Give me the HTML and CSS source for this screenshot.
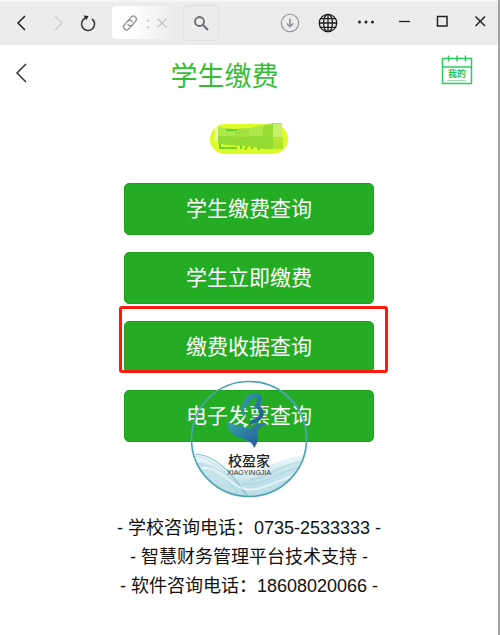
FILE: index.html
```html
<!DOCTYPE html>
<html lang="zh-CN">

<head>
    <meta charset="UTF-8">
    <meta name="viewport" content="width=device-width, initial-scale=1.0">
    <title>学生缴费</title>
    <link rel="stylesheet" href="styles.css">
</head>

<body>
    <div class="toolbar">
        <div class="nav-group">
            <button class="icon-btn" type="button" aria-label="后退">
                <svg width="20" height="20" viewBox="0 0 20 20"><path d="M13 3L6 10l7 7" stroke="#222" stroke-width="1.5"/></svg>
            </button>
            <button class="icon-btn" type="button" aria-label="前进">
                <svg width="20" height="20" viewBox="0 0 20 20"><path d="M8 3l7 7-7 7" stroke="#ccc" stroke-width="1.3"/></svg>
            </button>
            <button class="icon-btn reload" type="button" aria-label="刷新">
                <svg width="20" height="20" viewBox="0 0 20 20"><path d="M14 5.800A6.500 6.500 0 1 1 7.500 5" stroke="#333" stroke-width="1.5"/><path d="M5.500 2.500l5 .500-2 4z" fill="#222"/></svg>
            </button>
        </div>
        <div class="address">
            <svg width="18" height="18" viewBox="0 0 18 18"><g transform="rotate(-48 9 9)" stroke="#999" stroke-width="1.400"><path d="M9 12H4a3 3 0 0 1 0-6h5a3 3 0 0 1 2.500 4"/><path d="M9 6h5a3 3 0 0 1 0 6H9a3 3 0 0 1-2.500-4"/></g></svg>
            <input class="address-input" type="text" value=":" aria-label="地址">
            <button class="clear-btn" type="button" aria-label="清除">
                <svg width="12" height="12" viewBox="0 0 12 12"><path d="M1.500 1.500l9 9M10.500 1.500l-9 9" stroke="#c4c4c4" stroke-width="1.200"/></svg>
            </button>
        </div>
        <button class="search-btn" type="button" aria-label="搜索">
            <svg width="18" height="18" viewBox="0 0 18 18"><circle cx="7.500" cy="7.500" r="4.500" stroke="#666c72" stroke-width="1.800"/><path d="M11 11l5 5" stroke="#666c72" stroke-width="2"/></svg>
        </button>
        <div class="window-group">
            <button class="icon-btn" type="button" aria-label="下载">
                <svg width="20" height="20" viewBox="0 0 20 20"><circle cx="10" cy="10" r="8.700" stroke="#8c8f93" stroke-width="1.100"/><path d="M10 5.500v8M6.800 10.500l3.200 3.200 3.200-3.200" stroke="#8c8f93" stroke-width="1.500"/></svg>
            </button>
            <button class="icon-btn" type="button" aria-label="网络">
                <svg width="20" height="20" viewBox="0 0 20 20"><g stroke="#1c1c1c" stroke-width="1.300"><circle cx="10" cy="10" r="8.700"/><ellipse cx="10" cy="10" rx="4.500" ry="8.700"/><path d="M10 1.300v17.400M1.300 10h17.400M2.700 5.700h14.600M2.700 14.300h14.600"/></g></svg>
            </button>
            <button class="icon-btn" type="button" aria-label="更多">
                <svg width="20" height="20" viewBox="0 0 20 20"><g fill="#222"><circle cx="3.500" cy="9" r="1.500"/><circle cx="10" cy="9" r="1.500"/><circle cx="16.500" cy="9" r="1.500"/></g></svg>
            </button>
            <button class="icon-btn" type="button" aria-label="最小化">
                <svg width="20" height="20" viewBox="0 0 20 20"><path d="M5 8.500h11" stroke="#222" stroke-width="1.300"/></svg>
            </button>
            <button class="icon-btn" type="button" aria-label="最大化">
                <svg width="20" height="20" viewBox="0 0 20 20"><path d="M5.500 3.500h9.500v9.500h-9.500z" stroke="#222" stroke-width="1.500"/></svg>
            </button>
            <button class="icon-btn" type="button" aria-label="关闭">
                <svg width="20" height="20" viewBox="0 0 20 20"><path d="M5.500 3.500l9.500 9.500M15 3.500l-9.500 9.500" stroke="#222" stroke-width="1.500"/></svg>
            </button>
        </div>
    </div>

    <header class="page-header">
        <a class="back" href="#" aria-label="返回">
            <svg width="20" height="24" viewBox="0 0 20 24"><path d="M14 2l-9 9 9 9" stroke="#333" stroke-width="1.500"/></svg>
        </a>
        <h1>学生缴费</h1>
        <a class="mine" href="#">
            <svg width="32" height="32" viewBox="0 0 32 32">
                <path d="M1.500 4.500h29v25h-29zM1.500 13h29" stroke="#2fc964" stroke-width="1.500"/>
                <path d="M7.500 1.500v6M16 1.500v6M24.500 1.500v6" stroke="#2fc964" stroke-width="1.500"/>
                <path d="M6 26.500h19" stroke="#9be3b4"/>
                <text class="mine-text" x="16" y="23" text-anchor="middle">我的</text>
            </svg>
        </a>
    </header>

    <main>
        <div class="name-tag">
            <!-- 姓名打码 -->
            <svg width="78" height="32" viewBox="0 0 78 32">
                <rect x="0" y="1" width="78" height="30" rx="15" fill="#dcfb28"/>
                <path d="M10 20v5h15M10 25h17M31 22v4M37 23l-2 4M42 22v4M48 23l1 4" stroke="#48c72f" stroke-width="1.500"/>
                <path d="M8 4l16 2 17-1 22-5h9v14H8z" fill="#aee74a"/>
                <path d="M8 13h56v13H54l-10-2-10-1-18-1-8-2z" fill="#93da31"/>
                <path d="M25 6l14-1v9H25z" fill="#a4e140"/>
                <path d="M53 3l10-2v13H53z" fill="#97dc37"/>
                <path d="M63 1h9v13h-9z" fill="#c8ef6c"/>
                <path d="M63 14h10v12H63z" fill="#b2e52c"/>
                <path d="M5 4h3v14H5z" fill="#efffa0"/>
                <path d="M16 7h11" stroke="#48c72f" stroke-width="1.500"/>
            </svg>
        </div>

        <div class="menu">
            <button class="menu-btn" type="button">学生缴费查询</button>
            <button class="menu-btn" type="button">学生立即缴费</button>
            <div class="marked">
                <button class="menu-btn" type="button">缴费收据查询</button>
            </div>
            <div class="with-logo">
                <button class="menu-btn" type="button">电子发票查询</button>
                <svg class="logo" width="118" height="118" viewBox="0 0 118 118">
                    <defs>
                        <linearGradient id="fish" x1="0" y1="0" x2="1" y2="1">
                            <stop offset="0" stop-color="#39a5a5"/>
                            <stop offset="1" stop-color="#1d4f9c"/>
                        </linearGradient>
                        <linearGradient id="water" x1="0" y1="0" x2="0" y2="1">
                            <stop offset="0" stop-color="#e6f4f7"/>
                            <stop offset="1" stop-color="#a6d4df"/>
                        </linearGradient>
                        <clipPath id="round"><circle cx="59" cy="59" r="57"/></clipPath>
                    </defs>
                    <g clip-path="url(#round)">
                        <path d="M0 74c14-1 24 7 38 14s24 5 36 0 24-12 44-13v43H0z" fill="url(#water)" opacity=".75"/>
                        <path d="M0 84c18-6 28 6 44 14s38-14 74-18v38H0z" fill="#b5dce4" opacity=".5"/>
                        <path d="M4 76c20 2 34 18 54 40M4 82c18 4 34 16 46 34M60 100c20-2 30-16 56-20M52 104c22 2 36-12 62-18" stroke="#6fb4c8" stroke-width=".6" opacity=".5"/>
                        <path d="M6 74c22 2 38 22 54 46" stroke="#64a6c0" stroke-width="1" opacity=".8"/>
                        <path d="M12 88c16-2 24 14 40 20s34-8 58-14" stroke="#fff" stroke-width="2" opacity=".6"/>
                    </g>
                    <circle cx="59" cy="59" r="57.500" stroke="#4ba5b4" stroke-width="1.700"/>
                    <path d="M54 37c-4-5-4-11-1-14 1-5 5-9 10-10 4-1 8 1 9 5 0 3-2 6-2 8 4 3 5 8 2 12-3 5-9 4-12 8-1-3 0-6 4-7 4-1 6-4 5-8-1-3-4-2-5-5 2-3 4-6 2-8-3-1-5 2-6 5-3 3-6 4-6 8 1 2 1 4 0 6z" fill="url(#fish)"/>
                    <path d="M37 40c3 4 8 5 13 5 5 1 8 5 11 3 4-5 10-6 17-4-6 1-10 5-11 10 2 6 0 10-3 14-1-5-5-7-10-9-9-2-18-7-17-19z" fill="url(#fish)"/>
                    <circle cx="55" cy="46" r="1.500" fill="#d8f3de"/>
                    <text class="logo-name" x="59" y="86" text-anchor="middle">校盈家</text>
                    <text class="logo-pinyin" x="59" y="95" text-anchor="middle">XIAOYINGJIA</text>
                </svg>
            </div>
        </div>
    </main>

    <footer class="contact">
        <p>- 学校咨询电话：0735-2533333 -</p>
        <p>- 智慧财务管理平台技术支持 -</p>
        <p>- 软件咨询电话：18608020066 -</p>
    </footer>
</body>

</html>
```
FILE: styles.css
```css
* {
    box-sizing: border-box;
}

body {
    margin: 0;
    min-height: 100vh;
    background: #fff;
    border-right: 2px solid #a0a0a0;
    color: #111;
    font-family: "Liberation Sans", "Noto Sans CJK SC", sans-serif;
}

svg {
    display: block;
    fill: none;
}

button {
    border: none;
    padding: 0;
    background: none;
    font-family: inherit;
    cursor: pointer;
}

.toolbar {
    display: flex;
    align-items: center;
    height: 45px;
    padding: 0 8px 2px 12px;
    background: #ececec;
    border-top: 2px solid #f5f5f5;
}

.nav-group {
    display: flex;
    gap: 15px;
    margin-right: 14px;
}

.nav-group .reload {
    margin-left: -4px;
}

.icon-btn {
    width: 20px;
    height: 20px;
}

.address {
    display: flex;
    align-items: center;
    width: 62px;
    height: 33px;
    padding-left: 9px;
    border-radius: 4px;
    background: linear-gradient(to right, #fff 30%, #ececec);
}

.address svg {
    flex: none;
}

.address-input {
    width: 17px;
    padding: 0 0 0 7px;
    border: none;
    background: none;
    color: #aaa;
    font-size: 14px;
}

.search-btn {
    display: flex;
    align-items: center;
    justify-content: center;
    width: 36px;
    height: 36px;
    margin-left: 9px;
    border: 1px solid #e0e0e0;
    border-radius: 4px;
}

.window-group {
    display: flex;
    gap: 18px;
    margin-left: auto;
}

.page-header {
    display: flex;
    align-items: center;
    height: 64px;
    padding: 0 25px 6px 12px;
}

.page-header h1 {
    flex: 1;
    margin: 0;
    padding-top: 6px;
    color: #35be35;
    font-size: 27px;
    font-weight: 400;
    line-height: 36px;
    text-align: center;
}

.mine {
    margin: -8px 0 0 24px;
}

.mine-text {
    fill: #1fbf58;
    font-size: 9px;
    font-weight: bold;
}

.name-tag {
    display: flex;
    justify-content: center;
    margin-top: 14px;
}

.menu {
    display: flex;
    flex-direction: column;
    gap: 17px;
    width: 50%;
    min-width: 250px;
    margin: 28px auto 0;
}

.menu-btn {
    display: block;
    width: 100%;
    height: 52px;
    padding-bottom: 4px;
    border: 1px solid #1fa01f;
    border-radius: 5px;
    background: #25ac25;
    color: #fff;
    font-size: 21px;
}

.marked,
.with-logo {
    position: relative;
}

.marked::after {
    content: "";
    position: absolute;
    inset: -15px -14px 0 -5px;
    border: 3px solid #fb1a0e;
    border-radius: 3px;
    pointer-events: none;
}

.logo {
    position: absolute;
    top: -10px;
    left: 50%;
    transform: translateX(-50%);
    pointer-events: none;
}

.logo-name {
    fill: #222;
    font-size: 14px;
    font-weight: 500;
}

.logo-pinyin {
    fill: #333;
    font-size: 7px;
}

.contact {
    margin-top: 72px;
    font-size: 18px;
    line-height: 29px;
    text-align: center;
}

.contact p {
    margin: 0;
}
```
